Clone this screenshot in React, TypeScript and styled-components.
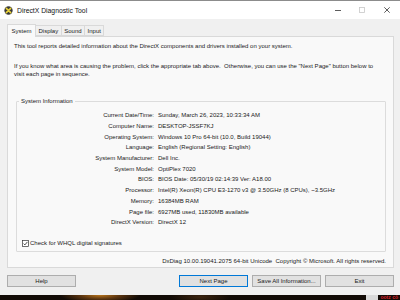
import styled, { createGlobalStyle } from "styled-components";

const ROWS: [string, string][] = [
  ["Current Date/Time:", "Sunday, March 26, 2023, 10:33:34 AM"],
  ["Computer Name:", "DESKTOP-JSSF7KJ"],
  ["Operating System:", "Windows 10 Pro 64-bit (10.0, Build 19044)"],
  ["Language:", "English (Regional Setting: English)"],
  ["System Manufacturer:", "Dell Inc."],
  ["System Model:", "OptiPlex 7020"],
  ["BIOS:", "BIOS Date: 05/30/19 02:14:39 Ver: A18.00"],
  ["Processor:", "Intel(R) Xeon(R) CPU E3-1270 v3 @ 3.50GHz (8 CPUs), ~3.5GHz"],
  ["Memory:", "16384MB RAM"],
  ["Page file:", "6927MB used, 11830MB available"],
  ["DirectX Version:", "DirectX 12"],
];

const TABS = ["System", "Display", "Sound", "Input"];

export default function App() {
  return (
    <>
      <GlobalStyle />
      <Window>
        <TitleBar>
          <AppIcon viewBox="0 0 10 10">
            <circle cx="5" cy="5" r="4.6" fill="#3a3a3a" />
            <path d="M2.6 2.6 L7.4 7.4 M7.4 2.6 L2.6 7.4" stroke="#e8d23a" strokeWidth="1.8" strokeLinecap="round" />
          </AppIcon>
          <Title>DirectX Diagnostic Tool</Title>
          <Controls>
            <Ctrl>
              <svg width="6" height="6" viewBox="0 0 6 6">
                <path d="M0 3.5 H6" stroke="#333" strokeWidth="0.8" />
              </svg>
            </Ctrl>
            <Ctrl>
              <svg width="6" height="6" viewBox="0 0 6 6">
                <rect x="0.5" y="0.5" width="5" height="5" fill="none" stroke="#c8c8c8" strokeWidth="0.8" />
              </svg>
            </Ctrl>
            <Ctrl>
              <svg width="6" height="6" viewBox="0 0 6 6">
                <path d="M0.3 0.3 L5.7 5.7 M5.7 0.3 L0.3 5.7" stroke="#333" strokeWidth="0.8" />
              </svg>
            </Ctrl>
          </Controls>
        </TitleBar>

        <Body>
          <TabStrip>
            {TABS.map((t, i) => (
              <Tab key={t} $active={i === 0}>
                {t}
              </Tab>
            ))}
          </TabStrip>
          <Panel>
            <Intro>
              This tool reports detailed information about the DirectX components and drivers installed on your system.
            </Intro>
            <Intro>
              If you know what area is causing the problem, click the appropriate tab above.&nbsp; Otherwise, you can use the "Next Page" button below to visit each page in sequence.
            </Intro>
            <GroupBox>
              <Legend>System Information</Legend>
              <InfoGrid>
                {ROWS.map(([label, value]) => (
                  <InfoRow key={label}>
                    <Label>{label}</Label>
                    <Value>{value}</Value>
                  </InfoRow>
                ))}
              </InfoGrid>
              <CheckRow>
                <CheckBox viewBox="0 0 7 7">
                  <rect x="0.5" y="0.5" width="6" height="6" fill="#fff" stroke="#333" strokeWidth="0.7" />
                  <path d="M1.6 3.6 L2.9 4.9 L5.4 1.9" fill="none" stroke="#222" strokeWidth="0.8" />
                </CheckBox>
                Check for WHQL digital signatures
              </CheckRow>
            </GroupBox>
            <Version>
              DxDiag 10.00.19041.2075 64-bit Unicode&nbsp; Copyright © Microsoft. All rights reserved.
            </Version>
          </Panel>
          <ButtonBar>
            <Button>Help</Button>
            <Spacer />
            <Button $primary>Next Page</Button>
            <Button>Save All Information...</Button>
            <Button>Exit</Button>
          </ButtonBar>
        </Body>
        <Desktop>
          <Watermark>ootz cô</Watermark>
        </Desktop>
      </Window>
    </>
  );
}

const GlobalStyle = createGlobalStyle`
  html, body {
    margin: 0;
    padding: 0;
    background: #f0f0f0;
  }
  body {
    font-family: "Liberation Sans", Arial, sans-serif;
    color: #1a1a1a;
  }
`;

const Window = styled.div`
  width: 400px;
  height: 300px;
  display: flex;
  flex-direction: column;
  overflow: hidden;
  background: #f0f0f0;
`;

const TitleBar = styled.div`
  display: flex;
  align-items: center;
  height: 19px;
  background: #fff;
  border-top: 1px solid #8c8c8c;
  padding-left: 4px;
`;

const AppIcon = styled.svg`
  width: 9px;
  height: 9px;
  margin-right: 4px;
`;

const Title = styled.span`
  font-size: 6.8px;
  color: #111;
  flex: 1;
`;

const Controls = styled.div`
  display: flex;
  height: 100%;
`;

const Ctrl = styled.div`
  width: 24px;
  display: flex;
  align-items: center;
  justify-content: center;
  &:last-child {
    width: 26px;
  }
`;

const Body = styled.div`
  display: flex;
  flex-direction: column;
  padding: 4px 6px 0 7px;
`;

const TabStrip = styled.div`
  display: flex;
  align-items: flex-end;
  height: 13px;
  position: relative;
  z-index: 1;
`;

const Tab = styled.div<{ $active?: boolean }>`
  font-size: 6px;
  height: ${({ $active }) => ($active ? "13px" : "11px")};
  line-height: ${({ $active }) => ($active ? "12px" : "10px")};
  padding: 0 ${({ $active }) => ($active ? "3.5px" : "2.5px")};
  margin-bottom: ${({ $active }) => ($active ? "-1px" : "0")};
  border: 1px solid #d9d9d9;
  border-bottom: ${({ $active }) => ($active ? "none" : "1px solid #d9d9d9")};
  margin-left: -1px;
  background: ${({ $active }) => ($active ? "#f9f9f9" : "#f0f0f0")};
  box-sizing: border-box;
  &:first-child {
    margin-left: 0;
  }
`;

const Panel = styled.div`
  height: 232px;
  box-sizing: border-box;
  border: 1px solid #d9d9d9;
  background: #f9f9f9;
  padding: 5px 7px 0 6px;
  display: flex;
  flex-direction: column;
`;

const Intro = styled.p`
  margin: 0 0 12px 0;
  font-size: 6px;
  line-height: 8px;
  padding-right: 8px;
`;

const GroupBox = styled.fieldset`
  margin: 8px 0 0 2px;
  padding: 6px 0 0 0;
  border: 1px solid #dcdcdc;
  border-radius: 1px;
  height: 154px;
  box-sizing: border-box;
  display: flex;
  flex-direction: column;
`;

const Legend = styled.legend`
  font-size: 6px;
  padding: 0 2px;
  margin-left: 2px;
`;

const InfoGrid = styled.div`
  display: flex;
  flex-direction: column;
`;

const InfoRow = styled.div`
  display: grid;
  grid-template-columns: 137px 1fr;
  column-gap: 4px;
  height: 10.7px;
  align-items: center;
  font-size: 6px;
`;

const Label = styled.span`
  text-align: right;
`;

const Value = styled.span`
  white-space: nowrap;
`;

const CheckRow = styled.div`
  display: flex;
  align-items: center;
  gap: 1px;
  font-size: 6px;
  margin: 12px 0 0 5px;
`;

const CheckBox = styled.svg`
  width: 7px;
  height: 7px;
`;

const Version = styled.div`
  margin-top: 6px;
  text-align: right;
  font-size: 6px;
`;

const ButtonBar = styled.div`
  display: flex;
  gap: 4px;
  margin-top: 7px;
`;

const Spacer = styled.div`
  flex: 1;
`;

const Button = styled.div<{ $primary?: boolean }>`
  width: 69px;
  height: 12px;
  box-sizing: border-box;
  font-size: 6px;
  line-height: 10px;
  text-align: center;
  background: #e1e1e1;
  border: 1px solid ${({ $primary }) => ($primary ? "#0078d7" : "#adadad")};
`;

const Desktop = styled.div`
  margin-top: 8px;
  flex: 1;
  display: flex;
  justify-content: flex-end;
  background:
    radial-gradient(ellipse 40px 8px at 100px 0px, #b8741c 0%, #5a3410 50%, transparent 100%),
    radial-gradient(ellipse 30px 6px at 200px 2px, #3b2410 0%, transparent 100%),
    #120b06;
`;

const Watermark = styled.span`
  color: #d8202a;
  font-weight: bold;
  font-size: 5px;
  line-height: 5px;
  border-left: 12px solid #d9d9d9;
  padding-left: 3px;
  padding-right: 2px;
`;
